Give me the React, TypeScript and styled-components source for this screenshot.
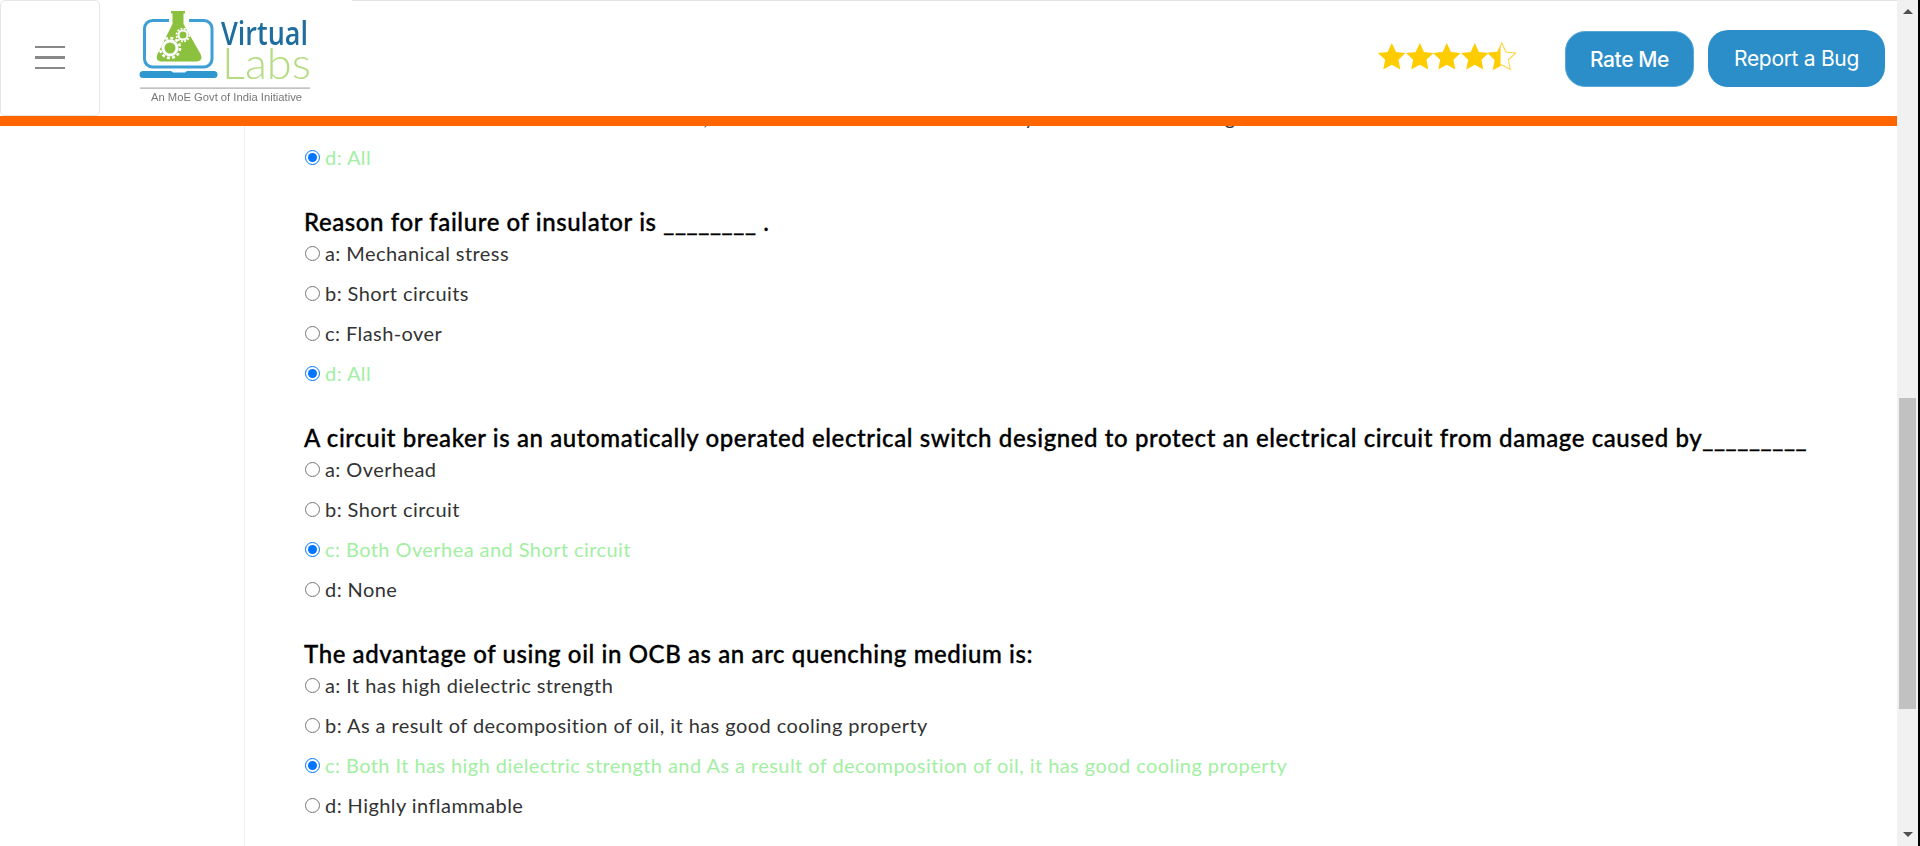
import React from "react";
import styled, { createGlobalStyle } from "styled-components";

const Global = createGlobalStyle`
  html, body { margin: 0; padding: 0; background: #fff; overflow: hidden; }
  #root { height: 846px; }
`;

const Page = styled.div`
  display: flex;
  height: 846px;
  width: 1920px;
  background: #000;
  font-family: "Lato", "Liberation Sans", sans-serif;
`;
const Main = styled.div`
  position: relative;
  flex: 1;
  min-width: 0;
  background: #fff;
  overflow: hidden;
`;
const Header = styled.header`
  position: absolute;
  inset: 0 0 auto 0;
  height: 126px;
  box-sizing: border-box;
  display: flex;
  align-items: flex-start;
  background: #fff;
  border-bottom: 10px solid #ff6600;
  &::before {
    content: "";
    position: absolute;
    top: 0;
    left: 352px;
    right: 0;
    height: 1px;
    background: #e2e2e2;
  }
`;
const MenuBox = styled.button`
  width: 100px;
  height: 116px;
  box-sizing: border-box;
  display: flex;
  flex-direction: column;
  align-items: center;
  justify-content: center;
  gap: 8px;
  padding: 0 0 1px;
  background: #fff;
  border: 1px solid #e6e6e6;
  border-radius: 5px;
`;
const MenuBar = styled.span`
  width: 30px;
  height: 2.5px;
  background: #888;
`;
const LogoWrap = styled.div`
  margin-left: 36px;
  width: 180px;
  height: 110px;
  flex: none;
`;
const Spacer = styled.div`
  flex: 1;
`;
const Stars = styled.div`
  display: flex;
  margin: 43px 49px 0 0;
`;
const RateButton = styled.button`
  height: 56px;
  width: 129px;
  margin: 31px 14px 0 0;
  border: 1px solid #5aa8d8;
  border-radius: 20px;
  background: #2b8ec9;
  color: #fff;
  font: 500 21px "Inter", "Lato", sans-serif;
  letter-spacing: -0.4px;
`;
const BugButton = styled.button`
  height: 57px;
  width: 177px;
  margin: 30px 12px 0 0;
  border: 0;
  border-radius: 20px;
  background: #2b8ec9;
  color: #fff;
  font: 400 21px "Inter", "Lato", sans-serif;
  letter-spacing: -0.3px;
`;

const Content = styled.main`
  margin-left: 244px;
  height: 846px;
  box-sizing: border-box;
  border-left: 1px solid #eeeeee;
  padding: 98px 0 0 60px;
  overflow: hidden;
`;
const Question = styled.section`
  margin-bottom: 32px;
`;
const Title = styled.h2`
  margin: 0 0 0 -1px;
  height: 24px;
  font-size: 24px;
  line-height: 23px;
  font-weight: 500;
  color: #000;
  white-space: nowrap;
  letter-spacing: 0.6px;
  -webkit-text-stroke: 0.35px #000;
`;
const Row = styled.label<{ $ok?: boolean }>`
  display: flex;
  align-items: center;
  box-sizing: border-box;
  height: 40px;
  padding-bottom: 2px;
  gap: 5px;
  font-size: 20px;
  letter-spacing: 0.43px;
  white-space: nowrap;
  color: ${(p) => (p.$ok ? "#a2efa2" : "#333")};
`;
const Radio = styled.input`
  width: 15px;
  height: 15px;
  margin: 1px 0 0;
  flex: none;
`;

const Track = styled.aside`
  flex: none;
  width: 21px;
  height: 846px;
  background: #f1f1f1;
  display: flex;
  flex-direction: column;
  align-items: center;
`;
const ArrowUp = styled.span`
  margin-top: 9px;
  width: 0;
  height: 0;
  border-left: 5px solid transparent;
  border-right: 5px solid transparent;
  border-bottom: 5px solid #505050;
`;
const Thumb = styled.div`
  margin-top: 384px;
  width: 17px;
  height: 311px;
  background: #c1c1c1;
`;
const ArrowDown = styled.span`
  margin-top: auto;
  margin-bottom: 9px;
  width: 0;
  height: 0;
  border-left: 5px solid transparent;
  border-right: 5px solid transparent;
  border-top: 5px solid #505050;
`;
const Edge = styled.div`
  flex: none;
  width: 2px;
  background: #000;
`;

const STAR = "M12 1.2l3.3 7.1 7.7.9-5.7 5.3 1.5 7.7L12 18.4l-6.8 3.8 1.5-7.700L1 9.200l7.700-.9z";

const Star = ({ half }: { half?: boolean }) => (
  <svg width="27.6" height="26.5" viewBox="1 1.200 22 21" preserveAspectRatio="none" style={{ overflow: "visible" }}>
    <defs>
      <clipPath id="halfStar">
        <rect x="0" y="0" width="11" height="24" />
      </clipPath>
    </defs>
    {half ? (
      <>
        <path d={STAR} fill="#fff" stroke="#ffd23a" strokeWidth="0.8" />
        <path d={STAR} fill="#ffcc00" clipPath="url(#halfStar)" />
      </>
    ) : (
      <path d={STAR} fill="#ffcc00" />
    )}
  </svg>
);

const Logo = () => (
  <svg width="180" height="110" viewBox="136 0 180 110" style={{ filter: "blur(0.4px)" }}>
    <rect x="144.5" y="20.5" width="67.500" height="46.500" rx="8" fill="none" stroke="#3d9fd3" strokeWidth="3" />
    <path d="M169 19h20v6h-20z" fill="#fff" />
    <path
      d="M171 11h14v2.500h-1.500v10.500l17 30c2.500 5 0 7.500-5 7.500h-33c-5 0-7-2.500-5-7.500l15-30V13.500H171z"
      fill="#8cc13f"
    />
    <g fill="none" stroke="#fff">
      <circle cx="170" cy="48" r="7" strokeWidth="3" />
      <circle cx="170" cy="48" r="10" strokeWidth="2.500" strokeDasharray="3 2.240" />
      <circle cx="183" cy="35" r="4.500" strokeWidth="2" />
      <circle cx="183" cy="35" r="6.500" strokeWidth="1.800" strokeDasharray="2 1.400" />
    </g>
    <path d="M143 71h28l2 1.500h12l2-1.500h27a3.500 3.500 0 0 1 0 7h-71a3.500 3.500 0 0 1 0-7z" fill="#2e97cf" />
    <text x="221" y="45" fontFamily="Open Sans" fontSize="32" fontWeight="600" fill="#1f6d9e" textLength="87" lengthAdjust="spacingAndGlyphs">
      Virtual
    </text>
    <text x="222" y="79" fontFamily="Lato" fontSize="43" fontWeight="300" fill="#b4dc82" textLength="89" lengthAdjust="spacingAndGlyphs">
      Labs
    </text>
    <rect x="140" y="87.500" width="170" height="1.200" fill="#aaa" />
    <text x="151" y="101" fontFamily="Liberation Sans" fontSize="10" fill="#777" textLength="151" lengthAdjust="spacingAndGlyphs">
      An MoE Govt of India Initiative
    </text>
  </svg>
);

const questions = [
  {
    title: "Reason for failure of insulator is ________ .",
    options: ["a: Mechanical stress", "b: Short circuits", "c: Flash-over", "d: All"],
    ok: 3,
  },
  {
    title: "A circuit breaker is an automatically operated electrical switch designed to protect an electrical circuit from damage caused by_________",
    options: ["a: Overhead", "b: Short circuit", "c: Both Overhea and Short circuit", "d: None"],
    ok: 2,
  },
  {
    title: "The advantage of using oil in OCB as an arc quenching medium is:",
    options: [
      "a: It has high dielectric strength",
      "b: As a result of decomposition of oil, it has good cooling property",
      "c: Both It has high dielectric strength and As a result of decomposition of oil, it has good cooling property",
      "d: Highly inflammable",
    ],
    ok: 2,
  },
];

const Option = ({ text, ok }: { text: string; ok?: boolean }) => (
  <Row $ok={ok}>
    <Radio type="radio" checked={!!ok} readOnly />
    <span>{text}</span>
  </Row>
);

export default function App() {
  return (
    <Page>
      <Global />
      <Main>
        <Content>
          <Question>
            <Option text="c: Insulators are fixed on to the cross arm, so that the conductor is held firmly at their correct rating" />
            <Option text="d: All" ok />
          </Question>
          {questions.map((q) => (
            <Question key={q.title}>
              <Title>{q.title}</Title>
              {q.options.map((o, i) => (
                <Option key={o} text={o} ok={i === q.ok} />
              ))}
            </Question>
          ))}
        </Content>
        <Header>
          <MenuBox aria-label="Menu">
            <MenuBar />
            <MenuBar />
            <MenuBar />
          </MenuBox>
          <LogoWrap>
            <Logo />
          </LogoWrap>
          <Spacer />
          <Stars>
            <Star />
            <Star />
            <Star />
            <Star />
            <Star half />
          </Stars>
          <RateButton>Rate Me</RateButton>
          <BugButton>Report a Bug</BugButton>
        </Header>
      </Main>
      <Track>
        <ArrowUp />
        <Thumb />
        <ArrowDown />
      </Track>
      <Edge />
    </Page>
  );
}
